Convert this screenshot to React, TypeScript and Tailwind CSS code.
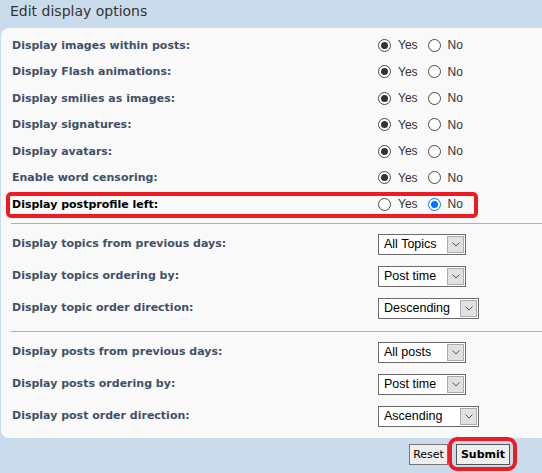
import type { ReactNode } from "react"

const yesNoRows = [
  { label: "Display images within posts:", yes: true },
  { label: "Display Flash animations:", yes: true },
  { label: "Display smilies as images:", yes: true },
  { label: "Display signatures:", yes: true },
  { label: "Display avatars:", yes: true },
  { label: "Enable word censoring:", yes: true },
  { label: "Display postprofile left:", yes: false, strong: true },
]

const topicRows = [
  { label: "Display topics from previous days:", value: "All Topics", w: "w-[88px]" },
  { label: "Display topics ordering by:", value: "Post time", w: "w-[88px]" },
  { label: "Display topic order direction:", value: "Descending", w: "w-[101px]" },
]

const postRows = [
  { label: "Display posts from previous days:", value: "All posts", w: "w-[88px]" },
  { label: "Display posts ordering by:", value: "Post time", w: "w-[88px]" },
  { label: "Display post order direction:", value: "Ascending", w: "w-[101px]" },
]

function Radio({ checked, blue }: { checked: boolean; blue?: boolean }) {
  if (blue) {
    return (
      <span className="w-[13px] h-[13px] rounded-full border-[1.5px] border-[#0075ff] bg-white flex items-center justify-center">
        <span className="w-[7px] h-[7px] rounded-full bg-[#0075ff]" />
      </span>
    )
  }
  return (
    <span className="w-[13px] h-[13px] rounded-full border border-[#4a4a4a] bg-white flex items-center justify-center">
      {checked && <span className="w-[7px] h-[7px] rounded-full bg-[#333]" />}
    </span>
  )
}

function Label({ children, strong }: { children: ReactNode; strong?: boolean }) {
  return (
    <div
      className={
        "w-[377px] pl-[11px] pt-px font-bold text-[11px] " +
        (strong ? "text-black" : "text-[#425067]")
      }
    >
      {children}
    </div>
  )
}

function Select({ value, w }: { value: string; w: string }) {
  return (
    <div
      className={
        w +
        " h-[21px] border border-[#6a6a6a] bg-white flex items-stretch font-['Liberation_Sans',Arial,sans-serif] text-[12.5px] text-black"
      }
    >
      <div className="flex-1 pl-[5px] flex items-center leading-none">{value}</div>
      <div className="w-[17px] my-px mr-px bg-[#e1e1e1] border border-[#acacac] flex items-center justify-center">
        <svg width="8" height="5" viewBox="0 0 8 5">
          <path d="M0.5 0.5 L4 4 L7.5 0.5" fill="none" stroke="#555" strokeWidth="1" />
        </svg>
      </div>
    </div>
  )
}

export default function App() {
  return (
    <div className="relative min-h-screen w-[542px] overflow-hidden bg-[#cadceb] font-['DejaVu_Sans',Verdana,sans-serif]">

      {/* Title */}
      <div className="h-[28px] pl-[10px] pt-[1px] text-[14px] leading-[20px] text-[#333]">
        Edit display options
      </div>

      {/* Panel */}
      <div className="ml-[1px] w-[560px] bg-[#f9f9f9] rounded-l-[8px] pt-[4px] pb-[6px]">

        {yesNoRows.map((r) => (
          <div key={r.label} className="h-[26.5px] flex items-center">
            <Label strong={r.strong}>{r.label}</Label>
            <div className="flex items-center font-['Liberation_Sans',Arial,sans-serif] text-[12px] text-[#333]">
              <Radio checked={r.yes} />
              <span className="ml-[7px] mr-[10px]">Yes</span>
              <Radio checked={!r.yes} blue={!r.yes} />
              <span className="ml-[7px]">No</span>
            </div>
          </div>
        ))}

        <div className="ml-[10px] mt-[5px] mb-[4.5px] h-px bg-[#a4b3bf]" />

        {topicRows.map((r) => (
          <div key={r.label} className="h-[32px] flex items-center">
            <Label>{r.label}</Label>
            <Select value={r.value} w={r.w} />
          </div>
        ))}

        <div className="ml-[10px] mt-[7px] mb-[4px] h-px bg-[#a4b3bf]" />

        {postRows.map((r) => (
          <div key={r.label} className="h-[32px] flex items-center">
            <Label>{r.label}</Label>
            <Select value={r.value} w={r.w} />
          </div>
        ))}
      </div>

      {/* Buttons */}
      <div className="mt-[6px] flex justify-end gap-[8px] pr-[32px] text-[11px] text-black">
        <button className="h-[21px] px-[3px] border border-[#767676] bg-[#efefef] leading-none">
          Reset
        </button>
        <button className="h-[21px] px-[4px] border border-[#555] bg-[#efefef] font-bold leading-none">
          Submit
        </button>
      </div>

      {/* Red highlight marks */}
      <div className="absolute left-[6px] top-[192px] w-[472px] h-[26px] border-4 border-[#ed1c24] rounded-[5px] pointer-events-none" />
      <div className="absolute left-[448px] top-[437px] w-[69px] h-[34px] border-4 border-[#ed1c24] rounded-[9px] pointer-events-none" />
    </div>
  )
}
